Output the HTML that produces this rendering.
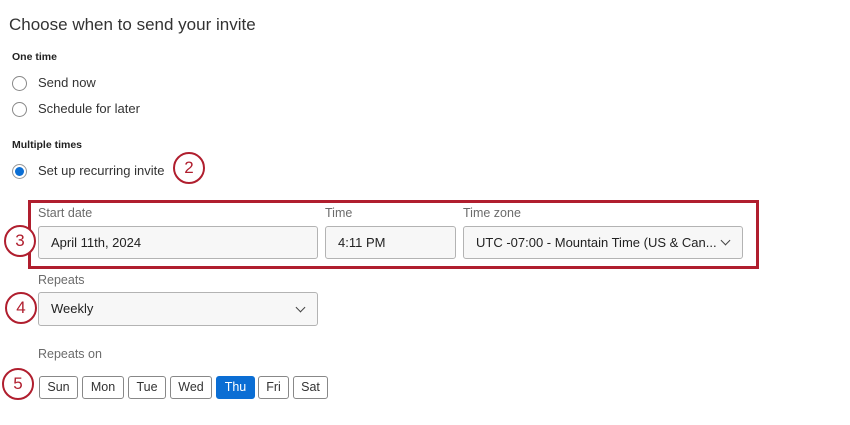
<!DOCTYPE html>
<html><head><style>
body{margin:0;width:850px;height:425px;background:#fff;font-family:"Liberation Sans",sans-serif;color:#2b2b2b;position:relative;overflow:hidden}
.a{position:absolute;white-space:nowrap}
.t{font-size:17px;color:#333}
.h{font-size:10.5px;font-weight:bold;color:#222}
.r{font-size:13px;color:#333}
.lbl{font-size:12.5px;color:#6b6b6b}
.rad{position:absolute;width:13px;height:13px;border:1px solid #888;border-radius:50%;background:#fff}
.inp{position:absolute;border:1px solid #b3b3b3;border-radius:3px;background:#f7f7f7;font-size:13px;color:#222;box-sizing:border-box;line-height:31px;padding-left:12px}
.chev{position:absolute;right:13px;top:10px;width:6px;height:6px;border-right:1.3px solid #444;border-bottom:1.3px solid #444;transform:rotate(45deg)}
.circ{position:absolute;width:32px;height:32px;border:2.5px solid #b01e2e;border-radius:50%;box-sizing:border-box;color:#b01e2e;font-size:17px;text-align:center;line-height:28px;background:#fff}
.d{position:absolute;top:376px;height:23px;border:1px solid #888;border-radius:3px;box-sizing:border-box;font-size:12.5px;text-align:center;line-height:21px;color:#333;background:#fff}
</style></head><body>
<div class="a t" style="left:9px;top:15px">Choose when to send your invite</div>
<div class="a h" style="left:12px;top:51px">One time</div>
<div class="rad" style="left:12px;top:76px"></div>
<div class="a r" style="left:38px;top:75px">Send now</div>
<div class="rad" style="left:12px;top:102px"></div>
<div class="a r" style="left:38px;top:101px">Schedule for later</div>
<div class="a h" style="left:12px;top:139px">Multiple times</div>
<div class="rad" style="left:12px;top:164px;border-color:#999"><div style="position:absolute;left:2px;top:2px;width:9px;height:9px;border-radius:50%;background:#0b6ed4"></div></div>
<div class="a r" style="left:38px;top:163px">Set up recurring invite</div>
<div class="circ" style="left:173px;top:152px">2</div>

<div style="position:absolute;left:28px;top:200px;width:731px;height:69px;border:3px solid #b01e2e;box-sizing:border-box"></div>
<div class="a lbl" style="left:38px;top:206px">Start date</div>
<div class="a lbl" style="left:325px;top:206px">Time</div>
<div class="a lbl" style="left:463px;top:206px">Time zone</div>
<div class="inp" style="left:38px;top:226px;width:280px;height:33px">April 11th, 2024</div>
<div class="inp" style="left:325px;top:226px;width:131px;height:33px">4:11 PM</div>
<div class="inp" style="left:463px;top:226px;width:280px;height:33px">UTC -07:00 - Mountain Time (US &amp; Can...<div class="chev"></div></div>
<div class="circ" style="left:4px;top:225px">3</div>

<div class="a lbl" style="left:38px;top:273px">Repeats</div>
<div class="inp" style="left:38px;top:292px;width:280px;height:34px">Weekly<div class="chev" style="top:11px"></div></div>
<div class="circ" style="left:5px;top:292px">4</div>

<div class="a lbl" style="left:38px;top:347px">Repeats on</div>
<div class="circ" style="left:2px;top:368px">5</div>
<div class="d" style="left:39px;width:39px">Sun</div>
<div class="d" style="left:82px;width:42px">Mon</div>
<div class="d" style="left:128px;width:38px">Tue</div>
<div class="d" style="left:170px;width:42px">Wed</div>
<div class="d" style="left:216px;width:39px;background:#0b6ed4;border-color:#0b6ed4;color:#fff">Thu</div>
<div class="d" style="left:258px;width:31px">Fri</div>
<div class="d" style="left:293px;width:35px">Sat</div>
</body></html>
